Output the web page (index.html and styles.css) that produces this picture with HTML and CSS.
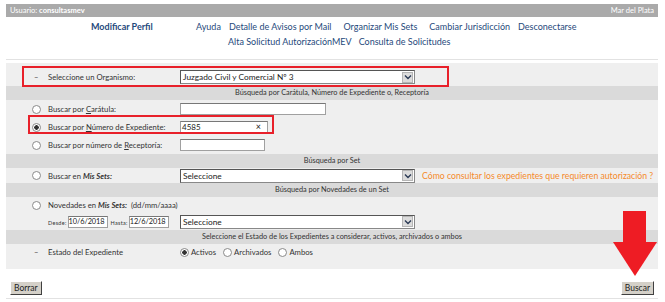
FILE: index.html
```html
<!DOCTYPE html>
<html>
<head>
<meta charset="UTF-8">
<link rel="stylesheet" href="styles.css">
</head>
<body>
<div class="page">

  <div class="userbar">
    <span>Usuario: <b>consultasmev</b></span>
    <span>Mar del Plata</span>
  </div>

  <div class="nav">
    <a class="nav-main" href="#">Modificar Perfil</a>
    <div class="nav-links">
      <div class="nav-row">
        <a href="#">Ayuda</a>
        <a href="#">Detalle de Avisos por Mail</a>
        <a class="wide-gap" href="#">Organizar Mis Sets</a>
        <a class="wide-gap" href="#">Cambiar Jurisdicción</a>
        <a href="#">Desconectarse</a>
      </div>
      <div class="nav-row nav-row2">
        <a href="#">Alta Solicitud AutorizaciónMEV</a>
        <a href="#">Consulta de Solicitudes</a>
      </div>
    </div>
  </div>

  <div class="panel">
    <div class="row row-org">
      <span class="mark">–</span>
      <label>Seleccione un Organismo:</label>
      <div class="field">
        <div class="select"><span>Juzgado Civil y Comercial Nº 3</span><span class="arrow"><svg width="8" height="6" viewBox="0 0 8 6"><path d="M1 1.5 L4 4.5 L7 1.5" fill="none" stroke="#2b3a55" stroke-width="1.4"/></svg></span></div>
      </div>
    </div>

    <div class="section">Búsqueda por Carátula, Número de Expediente o, Receptoría</div>

    <div class="row">
      <span class="mark"><input type="radio" name="tipo"></span>
      <label>Buscar por <u>C</u>arátula:</label>
      <div class="field"><input class="text w-caratula" type="text"></div>
    </div>
    <div class="row">
      <span class="mark"><input type="radio" name="tipo" checked></span>
      <label>Buscar por <u>N</u>úmero de Expediente:</label>
      <div class="field"><div class="text w-expte">4585<span class="clear">×</span></div></div>
    </div>
    <div class="row">
      <span class="mark"><input type="radio" name="tipo"></span>
      <label>Buscar por número de <u>R</u>eceptoría:</label>
      <div class="field"><input class="text w-recep" type="text"></div>
    </div>

    <div class="section">Búsqueda por Set</div>

    <div class="row row-sets">
      <span class="mark"><input type="radio" name="tipo"></span>
      <label>Buscar en <b><i>Mis Sets:</i></b></label>
      <div class="field">
        <div class="select"><span>Seleccione</span><span class="arrow"><svg width="8" height="6" viewBox="0 0 8 6"><path d="M1 1.5 L4 4.5 L7 1.5" fill="none" stroke="#2b3a55" stroke-width="1.4"/></svg></span></div>
        <a class="help" href="#">Cómo consultar los expedientes que requieren autorización ?</a>
      </div>
    </div>

    <div class="section">Búsqueda por Novedades de un Set</div>

    <div class="row row-nov">
      <span class="mark"><input type="radio" name="tipo"></span>
      <label class="wide">Novedades en <b><i>Mis Sets:</i></b> &nbsp;(dd/mm/aaaa)</label>
    </div>
    <div class="row row-dates">
      <span class="mark"></span>
      <div class="dates">
        <span class="tiny">Desde:</span><input class="text w-date" type="text" value="10/6/2018">
        <span class="tiny">Hasta:</span><input class="text w-date" type="text" value="12/6/2018">
      </div>
      <div class="field">
        <div class="select"><span>Seleccione</span><span class="arrow"><svg width="8" height="6" viewBox="0 0 8 6"><path d="M1 1.5 L4 4.5 L7 1.5" fill="none" stroke="#2b3a55" stroke-width="1.4"/></svg></span></div>
      </div>
    </div>

    <div class="section">Seleccione el Estado de los Expedientes a considerar, activos, archivados o ambos</div>

    <div class="row row-estado">
      <span class="mark">–</span>
      <label>Estado del Expediente</label>
      <div class="field estado">
        <span><input type="radio" name="estado" checked>Activos</span>
        <span><input type="radio" name="estado">Archivados</span>
        <span><input type="radio" name="estado">Ambos</span>
      </div>
    </div>

    <div class="highlight hl-org"></div>
    <div class="highlight hl-expte"></div>
  </div>

  <div class="actions">
    <button type="button">Borrar</button>
    <button type="button">Buscar</button>
  </div>

  <svg class="pointer" width="44" height="66" viewBox="0 0 44 66">
    <rect x="10" y="0" width="23" height="32" fill="#ee1c24"/>
    <polygon points="0,31 44,31 22,65" fill="#ee1c24"/>
  </svg>

</div>
</body>
</html>
```

FILE: styles.css
```css
body {
  margin: 0;
  background: #fff;
  font-family: Lato, "Liberation Sans", sans-serif;
  color: #333;
}

.page {
  position: relative;
  padding: 4px 7px 0 6px;
}

/* barra de usuario */
.userbar {
  display: flex;
  justify-content: space-between;
  height: 13px;
  line-height: 13px;
  padding: 0 4px;
  background: #aaaaaa;
  color: #fff;
  font-size: 7.5px;
}

/* menu */
.nav {
  display: flex;
  padding: 2px 0 0 85px;
  height: 40px;
  border-bottom: 1px solid #e2e2e2;
}

.nav a {
  color: #1f4a7c;
  text-decoration: none;
  font-size: 9px;
}

.nav-main {
  width: 105px;
  font-weight: bold;
  line-height: 15px;
}

.nav-row {
  display: flex;
  gap: 8px;
  line-height: 15px;
}

.nav-row .wide-gap { margin-left: 4px; }

.nav-row2 {
  padding-left: 32px;
  gap: 7px;
}

/* formulario */
.panel {
  position: relative;
  margin-top: 3px;
  background: #efefef;
  padding-bottom: 9px;
  font-size: 7.7px;
}

.row {
  display: grid;
  grid-template-columns: 26px 16px 132px 1fr;
  align-items: center;
  min-height: 18px;
}

.row > .mark { grid-column: 2; display: flex; align-items: center; }
.row > label { grid-column: 3; }
.row > .field { grid-column: 4; display: flex; align-items: center; gap: 7px; }
.row > label.wide { grid-column: 3 / 5; }

.row-org { padding: 7px 0 2px; min-height: 13px; }
.row-org .mark { padding-left: 2px; }
.row-sets { min-height: 15px; }
.row-nov { min-height: 16px; }
.row-dates { min-height: 17px; }
.row-estado { min-height: 16px; }
.row-estado .mark { padding-left: 2px; }

.row-dates .dates {
  grid-column: 3;
  display: flex;
  align-items: center;
}

.section {
  height: 14px;
  line-height: 14px;
  background: #dadada;
  text-align: center;
  font-size: 7.3px;
}

input[type=radio] {
  appearance: none;
  margin: 0;
  width: 9px;
  height: 9px;
  border: 1px solid #8a8a8a;
  border-radius: 50%;
  background: #fff;
  box-sizing: border-box;
}

input[type=radio]:checked {
  background: radial-gradient(circle, #333 0 2px, #fff 2.5px);
}

.text {
  box-sizing: border-box;
  height: 12px;
  margin: 0;
  padding: 0 2px;
  border: 1px solid #a0a0a0;
  border-top-color: #777;
  background: #fff;
  font: 8px Lato, "Liberation Sans", sans-serif;
  color: #222;
  line-height: 10px;
}

.w-caratula { width: 146px; }
.w-recep { width: 85px; }
.w-date { width: 40px; padding: 0; font-size: 7.4px; letter-spacing: -0.1px; }

.w-expte {
  display: flex;
  justify-content: space-between;
  width: 88px;
  height: 13px;
  padding: 0 6px 0 1px;
}

.clear { font-size: 9px; }

.tiny {
  font-size: 5.5px;
  letter-spacing: 0.3px;
  padding: 3px 1px 0 0;
}

.tiny + .text { margin-right: 3px; }

.select {
  box-sizing: border-box;
  display: flex;
  justify-content: space-between;
  align-items: center;
  width: 235px;
  height: 14px;
  border: 1px solid #888;
  border-top-color: #555;
  border-left-color: #555;
  background: #fff;
  padding-left: 2px;
  color: #222;
  font-size: 8.3px;
}

.select .arrow {
  display: flex;
  align-items: center;
  justify-content: center;
  width: 11px;
  height: 11px;
  margin-right: 1px;
  background: #dcdcdc;
  border: 1px solid #b5b5b5;
  box-sizing: border-box;
}

.help {
  color: #f58a2a;
  text-decoration: none;
  font-size: 8.7px;
  white-space: nowrap;
}

.estado { gap: 4px; }
.estado span { display: flex; align-items: center; gap: 2px; }

.highlight {
  position: absolute;
  border: 2px solid #e8202a;
  box-sizing: border-box;
}

.hl-org { left: 16px; top: 3px; width: 427px; height: 21px; }
.hl-expte { left: 22px; top: 52px; width: 246px; height: 19px; }

/* botones */
.actions {
  display: flex;
  justify-content: space-between;
  padding: 12px 4px 3px 4px;
  border-bottom: 1px solid #e2e2e2;
}

.actions button {
  height: 14px;
  padding: 0 3px;
  background: #d4d0c8;
  border: 1px solid;
  border-color: #fff #404040 #404040 #fff;
  font: 8.5px Lato, "Liberation Sans", sans-serif;
  color: #222;
}

.pointer {
  position: absolute;
  left: 613px;
  top: 211px;
}
```
